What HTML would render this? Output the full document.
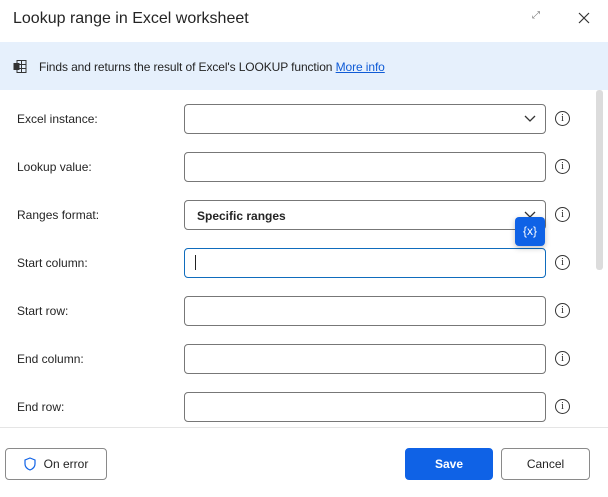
<!DOCTYPE html><html><head><style>
body{margin:0;width:608px;height:497px;background:#fff;font-family:"Liberation Sans",sans-serif;position:relative;overflow:hidden;color:#242424}
.a{position:absolute}
.lbl{position:absolute;left:17px;font-size:12px}
.in{position:absolute;left:184px;width:362px;height:30px;border:1px solid #777;border-radius:4px;box-sizing:border-box}
.info{position:absolute;left:555px;width:13px;height:13px;border:1.3px solid #333;border-radius:50%;font-size:10px;text-align:center;line-height:13px;font-family:"Liberation Serif",serif}
.btn{position:absolute;top:448px;height:32px;border:1px solid #8a8a8a;border-radius:4px;box-sizing:border-box;font-size:12px;display:flex;align-items:center;justify-content:center}
</style></head><body>
<div class="a" style="left:13px;top:10px;font-size:16px;">Lookup range in Excel worksheet</div>
<div class="a" style="left:532px;top:10px;font-size:10px;color:#777">⤢</div>
<svg class="a" style="left:578px;top:12px" width="12" height="12"><path d="M1 1L11 11M11 1L1 11" stroke="#333" stroke-width="1.2"/></svg>
<div class="a" style="left:0;top:42px;width:608px;height:48px;background:#e6f0fc"></div>
<svg class="a" style="left:13px;top:60px" width="14" height="13"><rect x="4" y="0.5" width="9" height="12" fill="none" stroke="#333"/><path d="M4 4.5H13M4 8.5H13M8.5 0.5V12.5" stroke="#333"/><rect x="0.5" y="3" width="6" height="7" fill="#333"/></svg>
<div class="a" style="left:39px;top:60px;font-size:12px;letter-spacing:-0.1px">Finds and returns the result of Excel's LOOKUP function <span style="color:#0f5bd6;text-decoration:underline">More info</span></div>
<div class="a" style="left:596px;top:90px;width:7px;height:180px;background:#dcdcdc;border-radius:3px"></div>

<div class="lbl" style="top:112px">Excel instance:</div><div class="in" style="top:104px"></div>
<svg class="a" style="left:524px;top:115px" width="12" height="8"><path d="M1 1L6 6L11 1" stroke="#333" fill="none" stroke-width="1.3"/></svg><div class="info" style="top:111px">i</div>
<div class="lbl" style="top:160px">Lookup value:</div><div class="in" style="top:152px"></div><div class="info" style="top:159px">i</div>
<div class="lbl" style="top:208px">Ranges format:</div><div class="in" style="top:200px"></div>
<svg class="a" style="left:524px;top:211px" width="12" height="8"><path d="M1 1L6 6L11 1" stroke="#333" fill="none" stroke-width="1.3"/></svg>
<div class="a" style="left:197px;top:209px;font-size:12px;font-weight:bold">Specific ranges</div><div class="info" style="top:207px">i</div>
<div class="lbl" style="top:256px">Start column:</div><div class="in" style="top:248px;border-color:#0f6cbd"></div>
<div class="a" style="left:195px;top:255px;width:1px;height:15px;background:#222"></div><div class="info" style="top:255px">i</div>
<div class="a" style="left:515px;top:217px;width:30px;height:29px;background:#0f62e6;border-radius:4px;color:#fff;font-size:12px;text-align:center;line-height:28px;box-shadow:0 2px 6px rgba(0,0,0,.25)">{x}</div>
<div class="lbl" style="top:304px">Start row:</div><div class="in" style="top:296px"></div><div class="info" style="top:303px">i</div>
<div class="lbl" style="top:352px">End column:</div><div class="in" style="top:344px"></div><div class="info" style="top:351px">i</div>
<div class="lbl" style="top:400px">End row:</div><div class="in" style="top:392px"></div><div class="info" style="top:399px">i</div>

<div class="a" style="left:0;top:427px;width:608px;height:1px;background:#e5e5e5"></div>
<div class="a" style="left:0;top:428px;width:608px;height:69px;background:#fff"></div>
<div class="btn" style="left:5px;width:102px"><svg width="12" height="14" style="margin-right:8px"><path d="M6 1L11 3V7C11 10 8.5 12 6 13C3.5 12 1 10 1 7V3Z" fill="none" stroke="#0f62e6" stroke-width="1.2"/></svg>On error</div>
<div class="btn" style="left:405px;width:88px;background:#0f62e6;border-color:#0f62e6;color:#fff;font-weight:bold">Save</div>
<div class="btn" style="left:501px;width:89px">Cancel</div>
</body></html>
